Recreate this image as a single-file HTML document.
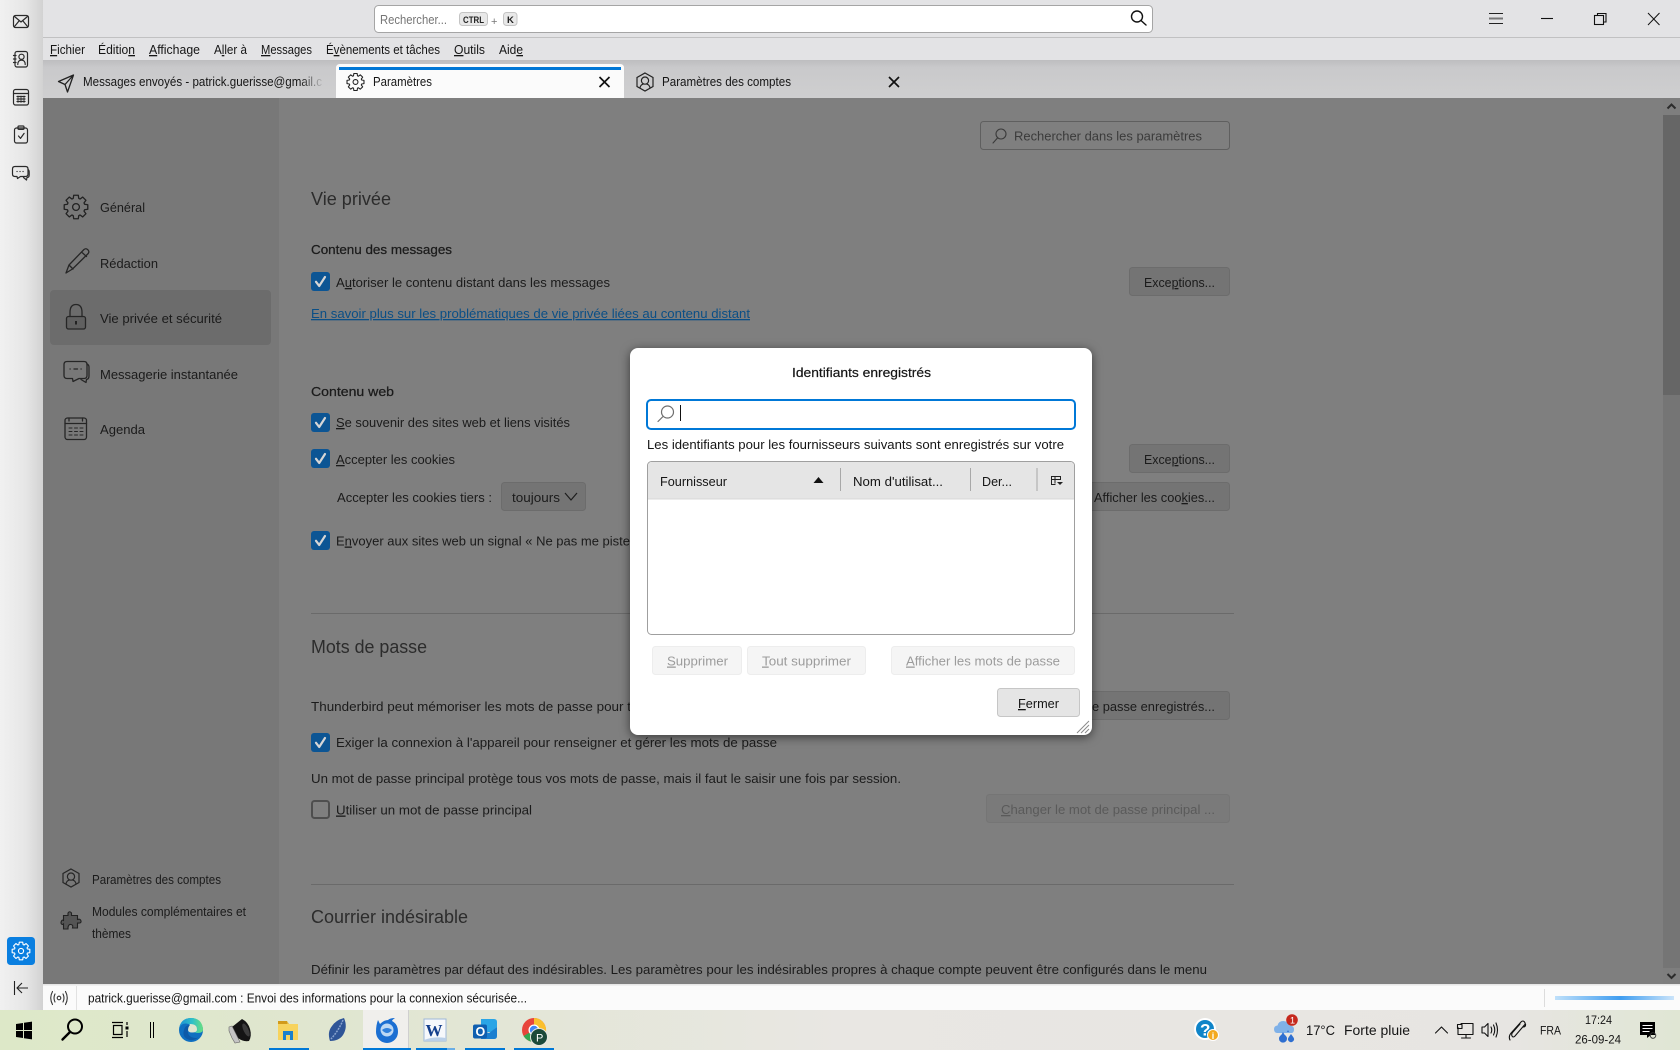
<!DOCTYPE html>
<html lang="fr"><head><meta charset="utf-8"><title>Identifiants enregistrés</title>
<style>
html,body{margin:0;padding:0;background:#7f7f7f;width:1680px;height:1050px;overflow:hidden}
svg{display:block;position:absolute;left:0;top:0}
text{font-family:"Liberation Sans",sans-serif;font-size:13px;fill:#1c1c1c}
.u{text-decoration:underline}
.m{fill:#151515}
.d{fill:#1b1b1b;transform:translateY(.5px)}
.h{font-size:18px;fill:#2c2c2c}
.b{stroke:#1b1b1b;stroke-width:.25px}
.t{fill:#151515;transform:translateY(.5px)}
.g{fill:#9c9c9c}
.i{fill:none;stroke:#262626;stroke-width:1.3;stroke-linecap:round;stroke-linejoin:round}
.r{fill:none;stroke:#2a2a2a;stroke-width:1.2;stroke-linecap:round;stroke-linejoin:round}
.w{fill:none;stroke:#111;stroke-width:1.1;stroke-linecap:round;stroke-linejoin:round}
</style></head><body>
<svg width="1680" height="1050" viewBox="0 0 1680 1050" xmlns="http://www.w3.org/2000/svg">
<defs>
<linearGradient id="rail" x1="0" x2="1" y1="0" y2="0"><stop offset="0" stop-color="#f1f1f1"/><stop offset=".6" stop-color="#e6e6e6"/><stop offset="1" stop-color="#d2d2d2"/></linearGradient>
<linearGradient id="tabs" x1="0" x2="0" y1="0" y2="1"><stop offset="0" stop-color="#bdbdbf"/><stop offset=".2" stop-color="#c9c9cb"/><stop offset="1" stop-color="#cfcfd0"/></linearGradient>
<linearGradient id="tb" x1="0" x2="1" y1="0" y2="0"><stop offset="0" stop-color="#dde8c8"/><stop offset=".2" stop-color="#e0e6d0"/><stop offset=".5" stop-color="#e9e7e3"/><stop offset=".9" stop-color="#e7e5e2"/><stop offset="1" stop-color="#e0e6d4"/></linearGradient>
<linearGradient id="prog" x1="0" x2="1" y1="0" y2="0"><stop offset="0" stop-color="#bfe0fa"/><stop offset=".55" stop-color="#3f9df0"/><stop offset="1" stop-color="#cbe4fa"/></linearGradient>
<linearGradient id="fade" gradientUnits="userSpaceOnUse" x1="300" x2="322" y1="0" y2="0"><stop offset="0" stop-color="#151515"/><stop offset="1" stop-color="#151515" stop-opacity=".1"/></linearGradient>
<linearGradient id="edgeTop" x1="0" x2="1" y1="0" y2="0"><stop offset="0" stop-color="#1a8ed6"/><stop offset=".55" stop-color="#2fc0c8"/><stop offset="1" stop-color="#6adf80"/></linearGradient>
<g id="gear"><path d="M8.56-2.78L11.78-2.29L11.78 2.29L8.56 2.78L8.02 4.09L9.95 6.71L6.71 9.95L4.09 8.02L2.78 8.56L2.29 11.78L-2.29 11.78L-2.78 8.56L-4.09 8.02L-6.71 9.95L-9.95 6.71L-8.02 4.09L-8.56 2.78L-11.78 2.29L-11.78-2.29L-8.56-2.78L-8.02-4.09L-9.95-6.71L-6.71-9.95L-4.09-8.02L-2.78-8.56L-2.29-11.78L2.29-11.78L2.78-8.56L4.09-8.02L6.71-9.95L9.95-6.71L8.02-4.09Z"/><circle r="3.4"/></g>
<g id="acct"><path d="M0-9L8-4.5V4.5L0 9L-8 4.5V-4.5Z"/><circle cy="-1.4" r="3.6"/><path d="M-5 6.4C-5 3.6-3 2.2-1.6 2.2M5 6.4C5 3.6 3 2.2 1.6 2.2"/></g>
<g id="ck"><rect width="19" height="19" rx="3" fill="#0c5594"/><path d="M5 9.8L8.2 14L14 5" fill="none" stroke="#d6d6d6" stroke-width="2.2" stroke-linecap="round" stroke-linejoin="round"/></g>
</defs>

<!-- content -->
<rect x="0" y="0" width="1680" height="1050" fill="#7f7f7f"/>
<rect x="43" y="98" width="236" height="887" fill="#787878"/>
<rect x="50" y="290" width="221" height="55" rx="4" fill="#6c6c6c"/>

<!-- rail -->
<rect x="0" y="0" width="43" height="1050" fill="url(#rail)"/>
<g class="r">
<rect x="13.5" y="15.5" width="15" height="12" rx="2"/><path d="M14.5 16.5L21 22L27.5 16.5M14.5 26.5L19 21M27.5 26.5L23 21"/>
<rect x="15" y="51.5" width="12.5" height="15.5" rx="2"/><path d="M13.5 55.5h2.5M13.500 59h2.500M13.500 62.500h2.500"/><circle cx="21.500" cy="56.800" r="2.600"/><path d="M17.800 64.500c0-3 1.600-4.300 3.700-4.300s3.700 1.300 3.700 4.300"/>
<rect x="13.500" y="89.500" width="15" height="15.500" rx="2"/><path d="M13.500 93.500h15M17 96.500h8M17 99h8M17 101.500h8" /><path d="M18 96v6.500M21 96v6.500M24 96v6.500" stroke-width=".8"/>
<rect x="14.500" y="128" width="13" height="15" rx="2"/><rect x="18" y="126" width="6" height="3.400" rx="1"/><path d="M18.500 136l2 2.400 3.600-5"/>
<g transform="translate(0,1)"><path d="M15 165.500h10.500q2.500 0 2.500 2.500v5q0 2.500-2.500 2.500h-5l-3 2-.5-2h-2q-2.500 0-2.500-2.500v-5q0-2.500 2.500-2.500z"/><path d="M28 168.500q1.200.8 1.200 2.500v3q0 2.500-2.200 2.500l-.5 2.500-3-2.500"/><path d="M17 170.500h.1M20 170.500h.1M23 170.500h.1"/></g>
</g>
<rect x="7" y="937" width="28" height="28" rx="3.500" fill="#0a7fe0"/>
<use href="#gear" transform="translate(21,951) scale(.75)" fill="none" stroke="#fff" stroke-width="1.500" stroke-linejoin="round"/>
<path d="M14.500 981v14M28 988H17M22 983l-5 5 5 5" fill="none" stroke="#222" stroke-width="1.100"/>

<!-- title bar -->
<rect x="43" y="0" width="1637" height="60" fill="#e3e3e5"/>
<rect x="43" y="37" width="1637" height="1" fill="#c1c1c2"/>
<rect x="374.500" y="5.500" width="778" height="27" rx="4" fill="#fff" stroke="#a5a5a5"/>
<text x="380" y="24" textLength="67" lengthAdjust="spacingAndGlyphs" style="fill:#757575">Rechercher...</text>
<rect x="459.500" y="12.500" width="28" height="13" rx="3" fill="#e8e8e8" stroke="#c4c4c4"/>
<text x="463" y="23" textLength="21" lengthAdjust="spacingAndGlyphs" style="font-size:9.500px;fill:#222;font-weight:bold">CTRL</text>
<text x="491" y="25" style="font-size:11px;fill:#777">+</text>
<rect x="503.500" y="12.500" width="13.500" height="13" rx="3" fill="#e8e8e8" stroke="#c4c4c4"/>
<text x="507" y="23" style="font-size:9.500px;fill:#222;font-weight:bold">K</text>
<g fill="none" stroke="#111" stroke-width="1.400" stroke-linecap="round"><circle cx="1137" cy="16.500" r="5.500"/><path d="M1141 20.500L1146 25"/></g>
<path d="M1489 13.500h14M1489 18.500h14M1489 23.500h14" stroke="#222" stroke-width="1"/><path d="M1489 18.500h14" stroke="#777" stroke-width="2"/>
<path d="M1541 18.500h12" stroke="#111" stroke-width="1.100"/>
<path d="M1597.500 15.500v-2h8.500v8.500h-2" fill="none" stroke="#111" stroke-width="1.100"/><rect x="1594.500" y="15.500" width="9" height="9" fill="none" stroke="#111" stroke-width="1.100"/>
<path d="M1648 13l11.500 12M1659.500 13L1648 25" stroke="#111" stroke-width="1"/>

<!-- menu -->
<g class="mn">
<text class="m" x="50" y="54" textLength="35" lengthAdjust="spacingAndGlyphs"><tspan class="u">F</tspan>ichier</text>
<text class="m" x="98" y="54" textLength="37" lengthAdjust="spacingAndGlyphs">Éditio<tspan class="u">n</tspan></text>
<text class="m" x="149" y="54" textLength="51" lengthAdjust="spacingAndGlyphs"><tspan class="u">A</tspan>ffichage</text>
<text class="m" x="214" y="54" textLength="33" lengthAdjust="spacingAndGlyphs">A<tspan class="u">l</tspan>ler à</text>
<text class="m" x="261" y="54" textLength="51" lengthAdjust="spacingAndGlyphs"><tspan class="u">M</tspan>essages</text>
<text class="m" x="326" y="54" textLength="114" lengthAdjust="spacingAndGlyphs">É<tspan class="u">v</tspan>ènements et tâches</text>
<text class="m" x="454" y="54" textLength="31" lengthAdjust="spacingAndGlyphs"><tspan class="u">O</tspan>utils</text>
<text class="m" x="499" y="54" textLength="24" lengthAdjust="spacingAndGlyphs">Aid<tspan class="u">e</tspan></text>
</g>

<!-- tabs -->
<rect x="43" y="60" width="1637" height="38" fill="url(#tabs)"/>
<path d="M73.500 75L58.500 81.500L65 84.500L67.500 92ZM65 84.500L73.500 75" fill="none" stroke="#222" stroke-width="1.300" stroke-linejoin="round"/>
<text x="83" y="86" textLength="239" lengthAdjust="spacingAndGlyphs" fill="url(#fade)" style="fill:url(#fade)">Messages envoyés - patrick.guerisse@gmail.c</text>
<path d="M336 98V68q0-4 4-4h280q4 0 4 4v30z" fill="#fbfbfb"/>
<rect x="339" y="67" width="282" height="3" fill="#0077d6"/>
<use href="#gear" transform="translate(355.500,82) scale(.72)" fill="none" stroke="#222" stroke-width="1.500" stroke-linejoin="round"/>
<text class="m" x="373" y="86" textLength="59" lengthAdjust="spacingAndGlyphs">Paramètres</text>
<path d="M599.500 77l10 10M609.500 77l-10 10" stroke="#111" stroke-width="1.700"/>
<use href="#acct" transform="translate(645,82)" fill="none" stroke="#222" stroke-width="1.200"/>
<text class="m" x="662" y="86" textLength="129" lengthAdjust="spacingAndGlyphs">Paramètres des comptes</text>
<path d="M889 77l10 10M899 77l-10 10" stroke="#111" stroke-width="1.700"/>

<!-- sidebar -->
<use href="#gear" transform="translate(76,207)" fill="none" stroke="#222" stroke-width="1.300" stroke-linejoin="round"/>
<text class="d" x="100" y="211.500" textLength="45" lengthAdjust="spacingAndGlyphs">Général</text>
<g class="i"><path d="M66 273l3-8 15-15.500q2-1.500 3.500 0l.6.600q1.500 1.500 0 3.500L72.500 269zM69 265l4 4M81.500 252l5 4.500"/>
<rect x="66.500" y="316.500" width="19" height="12.500" rx="2" fill="#4a4a4a" fill-opacity=".35"/><path d="M70 316.500v-4q0-8 6-8t6 8v4"/></g>
<rect x="75" y="321" width="2" height="3.500" fill="#222"/>
<text class="d" x="100" y="267.500" textLength="58" lengthAdjust="spacingAndGlyphs">Rédaction</text>
<text class="d" x="100" y="322.500" textLength="122" lengthAdjust="spacingAndGlyphs">Vie privée et sécurité</text>
<g class="i"><path d="M67 361.500h17q3 0 3 3v11q0 3-3 3H79l-6 3-.5-3H67q-3 0-3-3v-11q0-3 3-3z"/><path d="M87 364q2 1 2 3v9q0 3-2.500 3.500l-.5 3-5-3"/><path d="M70 369h.2M74 369h3.500M81 369h.2"/></g>
<text class="d" x="100" y="378.500" textLength="138" lengthAdjust="spacingAndGlyphs">Messagerie instantanée</text>
<g class="i"><rect x="65" y="418" width="21.500" height="21.500" rx="2.500"/><path d="M65 423.500h21.500M69 418v3M82.500 418v3"/><path d="M69 428h3M74.500 428h3M80 428h3M69 431.500h3M74.500 431.500h3M80 431.500h3M69 435h3M74.500 435h3M80 435h3" stroke-width="1"/></g>
<text class="d" x="100" y="433.500" textLength="45" lengthAdjust="spacingAndGlyphs">Agenda</text>
<use href="#acct" transform="translate(71,878)" fill="none" stroke="#262626" stroke-width="1.200"/>
<text class="d" x="92" y="883.500" textLength="129" lengthAdjust="spacingAndGlyphs">Paramètres des comptes</text>
<path transform="translate(1,0)" d="M67 913q1.500-2.500 3.500 0v2.500h6v4q3-1 3.500 1.500t-3.500 2v5h-5q1-3-1.500-3.500T67 927.500v1.500h-4.500v-5q-1 1-2 0t0-3 2 0v-5.500H67z" fill="#555" stroke="#222" stroke-width="1.100"/>
<text class="d" x="92" y="915.500" textLength="154" lengthAdjust="spacingAndGlyphs">Modules complémentaires et</text>
<text class="d" x="92" y="937.500" textLength="39" lengthAdjust="spacingAndGlyphs">thèmes</text>

<!-- main -->
<rect x="980.500" y="121.500" width="249" height="28" rx="3" fill="none" stroke="#5f5f5f"/>
<g fill="none" stroke="#3a3a3a" stroke-width="1.100" stroke-linecap="round"><circle cx="1001" cy="134" r="5"/><path d="M997.500 138l-4.500 5"/></g>
<text x="1014" y="140.500" textLength="188" lengthAdjust="spacingAndGlyphs" style="fill:#3b3b3b">Rechercher dans les paramètres</text>
<text class="h" x="311" y="205" textLength="80" lengthAdjust="spacingAndGlyphs">Vie privée</text>
<text class="d b" x="311" y="253.500" textLength="141" lengthAdjust="spacingAndGlyphs">Contenu des messages</text>
<use href="#ck" x="311" y="272"/>
<text class="d" x="336" y="286.500" textLength="274" lengthAdjust="spacingAndGlyphs">A<tspan class="u">u</tspan>toriser le contenu distant dans les messages</text>
<rect x="1129.500" y="267.500" width="100" height="28" rx="3" fill="#747474" stroke="#6c6c6c"/>
<text class="d" x="1144" y="286.500" textLength="71" lengthAdjust="spacingAndGlyphs">Exce<tspan class="u">p</tspan>tions...</text>
<text x="311" y="318" textLength="439" lengthAdjust="spacingAndGlyphs" class="u" style="fill:#0b4f86">En savoir plus sur les problématiques de vie privée liées au contenu distant</text>
<text class="d b" x="311" y="395.500" textLength="83" lengthAdjust="spacingAndGlyphs">Contenu web</text>
<use href="#ck" x="311" y="413"/>
<text class="d" x="336" y="426.500" textLength="234" lengthAdjust="spacingAndGlyphs"><tspan class="u">S</tspan>e souvenir des sites web et liens visités</text>
<use href="#ck" x="311" y="449"/>
<text class="d" x="336" y="463.500" textLength="119" lengthAdjust="spacingAndGlyphs"><tspan class="u">A</tspan>ccepter les cookies</text>
<rect x="1129.500" y="444.500" width="100" height="28" rx="3" fill="#747474" stroke="#6c6c6c"/>
<text class="d" x="1144" y="463.500" textLength="71" lengthAdjust="spacingAndGlyphs">Exce<tspan class="u">p</tspan>tions...</text>
<text class="d" x="337" y="501.500" textLength="155" lengthAdjust="spacingAndGlyphs">Accepter les cookies tiers :</text>
<rect x="501.500" y="482.500" width="84" height="28" rx="3" fill="#747474" stroke="#6c6c6c"/>
<text class="d" x="512" y="501.500" textLength="48" lengthAdjust="spacingAndGlyphs">toujours</text>
<path d="M565 493l6 7 6-7" fill="none" stroke="#1d1d1d" stroke-width="1.200"/>
<rect x="1060.500" y="482.500" width="169" height="28" rx="3" fill="#747474" stroke="#6c6c6c"/>
<text class="d" x="1094" y="501.500" textLength="121" lengthAdjust="spacingAndGlyphs">Afficher les coo<tspan class="u">k</tspan>ies...</text>
<use href="#ck" x="311" y="531"/>
<text class="d" x="336" y="545" textLength="294" lengthAdjust="spacingAndGlyphs">E<tspan class="u">n</tspan>voyer aux sites web un signal « Ne pas me piste</text>
<rect x="311" y="613" width="923" height="1" fill="#6a6a6a"/>
<text class="h" x="311" y="653" textLength="116" lengthAdjust="spacingAndGlyphs">Mots de passe</text>
<text class="d" x="311" y="710.500" textLength="320" lengthAdjust="spacingAndGlyphs">Thunderbird peut mémoriser les mots de passe pour t</text>
<rect x="1060.500" y="691.500" width="169" height="28" rx="3" fill="#747474" stroke="#6c6c6c"/>
<text class="d" x="1092" y="710.500" textLength="123" lengthAdjust="spacingAndGlyphs">e passe enregistrés...</text>
<use href="#ck" x="311" y="733"/>
<text class="d" x="336" y="746.500" textLength="441" lengthAdjust="spacingAndGlyphs">Exiger la connexion à l'appareil pour renseigner et gérer les mots de passe</text>
<text class="d" x="311" y="782.500" textLength="590" lengthAdjust="spacingAndGlyphs">Un mot de passe principal protège tous vos mots de passe, mais il faut le saisir une fois par session.</text>
<rect x="312" y="801" width="17" height="17" rx="2.500" fill="none" stroke="#4e4e4e" stroke-width="2"/>
<text class="d" x="336" y="814" textLength="196" lengthAdjust="spacingAndGlyphs"><tspan class="u">U</tspan>tiliser un mot de passe principal</text>
<rect x="986.500" y="794.500" width="243" height="28" rx="3" fill="#7a7a7a" stroke="#757575"/>
<text x="1001" y="814" textLength="214" lengthAdjust="spacingAndGlyphs" style="fill:#5a5a5a"><tspan class="u">C</tspan>hanger le mot de passe principal ...</text>
<rect x="311" y="884" width="923" height="1" fill="#6a6a6a"/>
<text class="h" x="311" y="923" textLength="157" lengthAdjust="spacingAndGlyphs">Courrier indésirable</text>
<text class="d" x="311" y="973.500" textLength="896" lengthAdjust="spacingAndGlyphs">Définir les paramètres par défaut des indésirables. Les paramètres pour les indésirables propres à chaque compte peuvent être configurés dans le menu</text>

<!-- scrollbar -->
<rect x="1663" y="98" width="17" height="887" fill="#757575"/>
<rect x="1663" y="98" width="17" height="17" fill="#7e7e7e"/>
<rect x="1663" y="115" width="17" height="280" fill="#666"/>
<rect x="1663" y="968" width="17" height="17" fill="#7e7e7e"/>
<path d="M1667.500 108.500l4-4 4 4" fill="none" stroke="#2b2b2b" stroke-width="2"/>
<path d="M1667.500 974l4 4 4-4" fill="none" stroke="#2b2b2b" stroke-width="2"/>

<!-- status bar -->
<rect x="43" y="985" width="1637" height="25" fill="#fbfbfb"/>
<rect x="43" y="984" width="1637" height="1.500" fill="#e6e6e6"/>
<rect x="76" y="986" width="1" height="24" fill="#e2e2e2"/>
<rect x="1544" y="989" width="1" height="18" fill="#dcdcdc"/>
<g fill="none" stroke="#333" stroke-width="1.100" stroke-linecap="round"><circle cx="59" cy="998" r="1.800"/><path d="M55 994q-2 4 0 8M63 994q2 4 0 8M52.500 991.500q-3.500 6.500 0 13M65.500 991.500q3.500 6.500 0 13"/></g>
<text class="m" x="88" y="1002.500" textLength="439" lengthAdjust="spacingAndGlyphs">patrick.guerisse@gmail.com : Envoi des informations pour la connexion sécurisée...</text>
<rect x="1555" y="996" width="119" height="4" fill="url(#prog)"/>

<!-- dialog -->
<rect x="630" y="348" width="462" height="387" rx="8" fill="#fff" style="filter:drop-shadow(0 2px 5px rgba(0,0,0,.55))"/>
<text class="t b" x="792" y="376.500" textLength="139" lengthAdjust="spacingAndGlyphs" style="stroke:#151515;stroke-width:.2px">Identifiants enregistrés</text>
<rect x="647" y="400" width="428" height="29" rx="4" fill="#fff" stroke="#0078d7" stroke-width="2"/>
<g fill="none" stroke="#6e6e6e" stroke-width="1.200" stroke-linecap="round"><circle cx="667.500" cy="412" r="6"/><path d="M663 416.500l-5 5"/></g>
<rect x="680" y="405" width="1" height="16" fill="#111"/>
<text class="t" x="647" y="448.500" textLength="417" lengthAdjust="spacingAndGlyphs">Les identifiants pour les fournisseurs suivants sont enregistrés sur votre</text>
<rect x="647.500" y="461.500" width="427" height="173" rx="4" fill="#fff" stroke="#9f9f9f"/>
<path d="M648 499V466q0-4 4-4h418q4 0 4 4v33z" fill="#e5e5e5"/>
<rect x="648" y="498.500" width="426" height="1" fill="#d8d8d8"/>
<text class="t" x="660" y="485.500" textLength="67" lengthAdjust="spacingAndGlyphs">Fournisseur</text>
<path d="M813.500 483l5-6 5 6z" fill="#111"/>
<rect x="840" y="468" width="1" height="23" fill="#a8a8a8"/>
<text class="t" x="853" y="485.500" textLength="90" lengthAdjust="spacingAndGlyphs">Nom d'utilisat...</text>
<rect x="970" y="468" width="1" height="23" fill="#a8a8a8"/>
<text class="t" x="982" y="485.500" textLength="30" lengthAdjust="spacingAndGlyphs">Der...</text>
<rect x="1036.500" y="468" width="1" height="23" fill="#a8a8a8"/>
<path d="M1051.500 476.500h9v3h-9zM1051.500 479.500v5h4M1055 476.500v7" fill="none" stroke="#222" stroke-width="1"/><path d="M1057 482h6l-3 3z" fill="#222"/>
<rect x="652.500" y="646.500" width="89" height="28" rx="3" fill="#f5f5f5" stroke="#ededed"/>
<text class="g" x="667" y="665.500" textLength="61" lengthAdjust="spacingAndGlyphs"><tspan class="u">S</tspan>upprimer</text>
<rect x="747.500" y="646.500" width="118" height="28" rx="3" fill="#f5f5f5" stroke="#ededed"/>
<text class="g" x="762" y="665.500" textLength="89" lengthAdjust="spacingAndGlyphs"><tspan class="u">T</tspan>out supprimer</text>
<rect x="891.500" y="646.500" width="183" height="28" rx="3" fill="#f5f5f5" stroke="#ededed"/>
<text class="g" x="906" y="665.500" textLength="154" lengthAdjust="spacingAndGlyphs"><tspan class="u">A</tspan>fficher les mots de passe</text>
<rect x="997.500" y="688.500" width="82" height="28" rx="3" fill="#e5e5e5" stroke="#c6c6c6"/>
<text class="t" x="1018" y="707.500" textLength="41" lengthAdjust="spacingAndGlyphs"><tspan class="u">F</tspan>ermer</text>
<path d="M1077 733l12-12M1081 733l8-8M1085 733l4-4" stroke="#8a8a8a" stroke-width="1"/>

<!-- taskbar -->
<rect x="0" y="1010" width="1680" height="40" fill="url(#tb)"/>
<rect x="363" y="1010" width="45" height="38" fill="#f0efec"/>
<rect x="408" y="1010" width="1" height="40" fill="#cfcfcf"/>
<g fill="#000"><path d="M16 1024l7-1v7h-7zM24 1022.800l8-1.200v8.400h-8zM16 1031h7v7l-7-1zM24 1031h8v8.400l-8-1.200z"/></g>
<g fill="none" stroke="#000" stroke-linecap="round"><circle cx="75" cy="1026.500" r="7" stroke-width="2"/><path d="M70 1032l-7.500 7.500" stroke-width="2.400"/></g>
<g fill="none" stroke="#000" stroke-width="1.200"><path d="M112 1022.500h11M112 1037.500h11M113.500 1025.500h8.500v9h-8.500zM127 1022v3M127 1031v6"/></g>
<rect x="125.500" y="1026.500" width="3" height="3" fill="#000"/>
<path d="M150.500 1022v16M153.500 1022v16" stroke="#000" stroke-width="1"/>
<!-- edge -->
<circle cx="191" cy="1030" r="12" fill="#0f6fc0"/>
<path d="M179 1030q1-12 12-12 11 0 12 11.500q0 3.500-5 3.500-4 0-6-3 1-6-6-6.500-6 0-7 6.500z" fill="url(#edgeTop)"/>
<path d="M190 1024q7 0 7 5.500 0 3-5 3-4 0-4-3 0-2.500 2-5.500z" fill="#e0e6d0"/>
<path d="M188 1030q-1 7 7 8 3 0 4-1-6 5-12 2-5-3-3-9 1-5 6-5-2 2-2 5z" fill="#0d5aa8"/>
<!-- speaker -->
<path d="M232 1027l10-8q6 3 8 10t-1 12q-6 1-11-3z" fill="#141414"/>
<ellipse cx="246" cy="1030" rx="2.500" ry="7" fill="#3b3b3b" transform="rotate(-25 246 1030)"/>
<path d="M229 1027l3-1 6 12 2 4-5 1-3-5-3-7z" fill="#c4c4c4" stroke="#666" stroke-width=".6"/>
<!-- folder -->
<path d="M278 1021h9l2 3h9v16h-20z" fill="#e3b63c"/><rect x="278" y="1024" width="20" height="16" fill="#f7d35d"/><rect x="278" y="1021" width="9" height="3" fill="#d29a1a"/>
<path d="M283 1031h10v9h-3v-5h-4v5h-3z" fill="#1a80cc"/>
<!-- leaf -->
<path d="M344 1018q4 9-1 17-4 6-13 6-3-9 2-15 4-6 12-8z" fill="#2f5597"/><path d="M343 1020q-4 10-12 19" stroke="#8aa4cf" stroke-width="1.500" fill="none" stroke-dasharray="2 1"/>
<!-- thunderbird -->
<path d="M378 1020l2 4q4-4 8-4 2-2 7-2-3 2-3 3 6 3 6 11a11 11 0 0 1-22 0q0-7 2-12z" fill="#1b6fd2"/>
<circle cx="387" cy="1030" r="6.500" fill="#bcd8f4"/><path d="M382 1030q5-4 10 0-5 6-10 0z" fill="#2f80dc"/>
<!-- word -->
<rect x="424" y="1019" width="22" height="22" fill="#f6f8fb" stroke="#9fb8d8"/>
<text x="425.500" y="1036" style="font-size:17px;font-weight:bold;fill:#143f8c;font-family:'Liberation Serif',serif" textLength="17" lengthAdjust="spacingAndGlyphs">W</text>
<path d="M424 1040q10-4 22-2v3h-22z" fill="#b9cfe8"/>
<!-- outlook -->
<path d="M481 1019h13q3 0 3 3v5l-6 5h-10z" fill="#2aa5e6"/><path d="M481 1030l8 3 8-6v9q0 3-3 3h-13z" fill="#1a7fd0"/>
<rect x="473" y="1024.500" width="14" height="14" rx="2" fill="#0f5fb0"/>
<text x="475.500" y="1036" style="font-size:12.500px;font-weight:bold;fill:#fff">O</text>
<!-- chrome -->
<circle cx="534" cy="1030" r="12" fill="#e8453c"/>
<path d="M534 1030L523.600 1036A12 12 0 0 0 540 1040.400z" fill="#34a853"/>
<path d="M534 1018A12 12 0 0 1 544.400 1036L534 1030 534 1018z" fill="#fbc02d"/>
<circle cx="534" cy="1030" r="5.500" fill="#fff"/><circle cx="534" cy="1030" r="4.200" fill="#4285f4"/>
<circle cx="539" cy="1037" r="8.500" fill="#1c4a3a" stroke="#e8e7e3"/>
<text x="536" y="1041.500" style="font-size:11px;fill:#fff">P</text>
<!-- underlines -->
<rect x="269" y="1048" width="40" height="2" fill="#0078d7"/>
<rect x="363" y="1048" width="48" height="2" fill="#0078d7"/>
<rect x="416" y="1048" width="31" height="2" fill="#0078d7"/><rect x="447" y="1048" width="8" height="2" fill="#6aaee6"/>
<rect x="465" y="1048" width="40" height="2" fill="#0078d7"/>
<rect x="514" y="1048" width="40" height="2" fill="#0078d7"/>
<!-- tray -->
<circle cx="1205" cy="1029" r="11" fill="#fff"/><circle cx="1205" cy="1029" r="9" fill="#0f84c8"/>
<text x="1200" y="1035.500" style="font-size:17px;font-weight:bold;fill:#fff">?</text>
<circle cx="1213" cy="1035" r="5.500" fill="#f3a91f" stroke="#fff"/>
<text x="1211.800" y="1038.800" style="font-size:9px;font-weight:bold;fill:#fff">i</text>
<path d="M1277 1033q-3-.5-3-4 0-3 3.500-3.500 1-4.500 6-4.500 5 .5 6 4.500 4.500 0 4.500 4t-3.500 3.500z" fill="#7fb1e8"/>
<path d="M1281 1033q2-1.500 3-4 1 2.500 3 4a4 4 0 1 1-6 0z" fill="#2f6fd0" transform="translate(-1,3)"/><path d="M1291 1034q1.500 2 2.500 3.500a3 3 0 1 1-5 0q1-1.500 2.500-3.500z" fill="#2f6fd0"/><path d="M1287 1032l1-2 1 2" fill="#2f6fd0"/>
<circle cx="1292" cy="1020" r="5.800" fill="#c5281c"/>
<text x="1290" y="1023.500" style="font-size:9px;fill:#fff">1</text>
<text class="m" x="1306" y="1035" textLength="29" lengthAdjust="spacingAndGlyphs" style="font-size:13.500px">17°C</text>
<text class="m" x="1344" y="1035" textLength="66" lengthAdjust="spacingAndGlyphs" style="font-size:13.500px">Forte pluie</text>
<path d="M1435.500 1033l6-6 6 6" class="w"/>
<g class="w"><path d="M1461 1023.500h12v11h-15v-7M1466 1034.500v3M1461.500 1038h9"/><rect x="1457.500" y="1024.500" width="4.500" height="4"/></g>
<g class="w"><path d="M1482 1027h2.500l3.500-3.500v13l-3.500-3.500H1482z"/><path d="M1491 1027q1.500 3 0 6M1493.500 1025q2.500 5 0 10M1496 1023q3 7 0 14"/></g>
<g class="w"><path d="M1510 1040q-2-4 2-8l9-10q2-2 3.500 0t-.5 3.500l-9 10.500q-2 2-3 0t1-4l7-8M1523 1027q3 0 2.500-3"/></g>
<text class="m" x="1540" y="1034.500" textLength="21" lengthAdjust="spacingAndGlyphs" style="font-size:12px">FRA</text>
<text class="m" x="1585" y="1024" textLength="27" lengthAdjust="spacingAndGlyphs" style="font-size:12px">17:24</text>
<text class="m" x="1575" y="1043.500" textLength="46" lengthAdjust="spacingAndGlyphs" style="font-size:12px">26-09-24</text>
<path d="M1640 1022h15v13h-4l-4 3-0-3h-7z" fill="#000"/>
<path d="M1642.500 1025.500h10M1642.500 1028.500h10M1642.500 1031.500h7" stroke="#fff" stroke-width="1"/>
<circle cx="1653" cy="1035.500" r="2.800" fill="none" stroke="#333" stroke-width=".9"/>
</svg>
</body></html>
